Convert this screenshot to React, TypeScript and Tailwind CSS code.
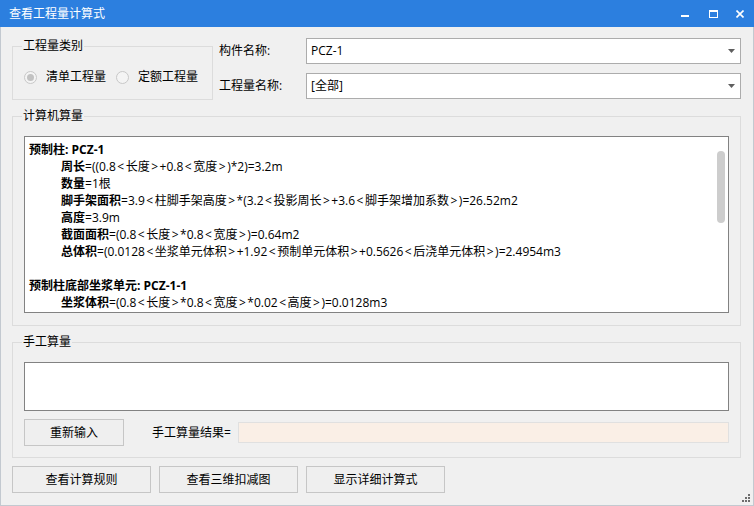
import React from 'react';

const font = { fontFamily: '"Open Sans", "Noto Sans CJK SC", sans-serif' };

type Part = { b?: boolean; t: string };

const lines: Part[][] = [
  [{ b: true, t: '预制柱: PCZ-1' }],
  [{ b: true, t: '周长' }, { t: '=((0.8<长度>+0.8<宽度>)*2)=3.2m' }],
  [{ b: true, t: '数量' }, { t: '=1根' }],
  [{ b: true, t: '脚手架面积' }, { t: '=3.9<柱脚手架高度>*(3.2<投影周长>+3.6<脚手架增加系数>)=26.52m2' }],
  [{ b: true, t: '高度' }, { t: '=3.9m' }],
  [{ b: true, t: '截面面积' }, { t: '=(0.8<长度>*0.8<宽度>)=0.64m2' }],
  [{ b: true, t: '总体积' }, { t: '=(0.0128<坐浆单元体积>+1.92<预制单元体积>+0.5626<后浇单元体积>)=2.4954m3' }],
  [],
  [{ b: true, t: '预制柱底部坐浆单元: PCZ-1-1' }],
  [{ b: true, t: '坐浆体积' }, { t: '=(0.8<长度>*0.8<宽度>*0.02<高度>)=0.0128m3' }],
];

// the brackets in the original font carry extra side bearing
function spaced(t: string) {
  return t.split(/([<>])/).map((s, k) =>
    s === '<' || s === '>' ? (
      <span key={k} className="mx-[1.5px]">{s}</span>
    ) : (
      s
    )
  );
}

function Caret() {
  return (
    <svg width="7" height="4" viewBox="0 0 7 4" className="mr-[5px]">
      <path d="M0 0 H7 L3.5 4 Z" fill="#5f5f5f" />
    </svg>
  );
}

function Select({ value }: { value: string }) {
  return (
    <div className="flex h-[26px] flex-1 items-center justify-between border border-[#acacac] bg-white pl-[4px]">
      <span className="text-[12px] text-black">{value}</span>
      <Caret />
    </div>
  );
}

function Radio({ checked, label }: { checked?: boolean; label: string }) {
  return (
    <div className="flex items-center">
      <span className="flex h-[13px] w-[13px] items-center justify-center rounded-full border border-[#c8c8c8] bg-[#f4f4f4]">
        {checked && <span className="h-[7px] w-[7px] rounded-full bg-[#c2c2c2]" />}
      </span>
      <span className="ml-[9px] text-[12px] text-black">{label}</span>
    </div>
  );
}

function Btn({ children, w }: { children: React.ReactNode; w: string }) {
  return (
    <button className={`flex h-[27px] ${w} items-center justify-center border border-[#c6c6c6] bg-[#efefef] text-[12px] text-black`}>
      {children}
    </button>
  );
}

export default function App() {
  return (
    <div className="flex h-[506px] w-[754px] flex-col overflow-hidden bg-[#f0f0f0]" style={font}>
      {/* title bar */}
      <div className="flex h-[27px] items-center justify-between bg-[#2c7fdf] pl-[9px] text-white">
        <span className="text-[12px]">查看工程量计算式</span>
        <div className="flex h-full items-center">
          <div className="flex w-[29px] justify-center pt-[5px]">
            <span className="h-[2px] w-[8px] bg-white" />
          </div>
          <div className="flex w-[29px] justify-center">
            <span className="h-[8px] w-[9px] border border-t-2 border-white" />
          </div>
          <div className="flex w-[26px] justify-center pr-[2px]">
            <svg width="8" height="8" viewBox="0 0 8 8">
              <path d="M0.5 0.5 L7.5 7.5 M7.5 0.5 L0.5 7.5" stroke="white" strokeWidth="1.6" />
            </svg>
          </div>
        </div>
      </div>

      <div className="flex flex-1 flex-col border-x border-b border-[#c3c9d0] pl-[11px] pr-[12px]">
        {/* top row */}
        <div className="mt-[11px] flex items-start">
          <fieldset className="mt-[1px] h-[61px] w-[201px] border border-[#dcdcdc] px-[11px]">
            <legend className="ml-[-2px] px-[1px] text-[12px] leading-[14px] text-black">工程量类别</legend>
            <div className="mt-[15px] flex items-center gap-[10px]">
              <Radio checked label="清单工程量" />
              <Radio label="定额工程量" />
            </div>
          </fieldset>
          <div className="ml-[6px] flex flex-1 flex-col gap-[9px]">
            <div className="flex items-center">
              <span className="w-[87px] text-[12px] text-black">构件名称:</span>
              <Select value="PCZ-1" />
            </div>
            <div className="flex items-center">
              <span className="w-[87px] text-[12px] text-black">工程量名称:</span>
              <Select value="[全部]" />
            </div>
          </div>
        </div>

        {/* computed */}
        <fieldset className="mt-[9px] h-[217px] border border-[#dcdcdc] px-[11px]">
          <legend className="ml-[-2px] px-[1px] text-[12px] leading-[14px] text-black">计算机算量</legend>
          <div className="relative mt-[13px] h-[177px] border border-[#828282] bg-white pl-[4px] pt-[4px]">
            {lines.map((ln, i) => (
              <div key={i} className={`h-[17px] whitespace-nowrap text-[12px] leading-[17px] text-black ${i === 0 || i === 8 ? '' : 'pl-[32px]'}`}>
                {ln.map((p, j) => (
                  <span key={j} className={p.b ? 'font-bold' : ''}>{spaced(p.t)}</span>
                ))}
              </div>
            ))}
            <div className="absolute right-[3px] top-[14px] h-[72px] w-[8px] rounded-full bg-[#cdcdcd]" />
          </div>
        </fieldset>

        {/* manual */}
        <fieldset className="mt-[9px] h-[123px] border border-[#dcdcdc] px-[11px]">
          <legend className="ml-[-2px] px-[1px] text-[12px] leading-[14px] text-black">手工算量</legend>
          <div className="mt-[13px] h-[49px] border border-[#828282] bg-white" />
          <div className="mt-[8px] flex items-center">
            <Btn w="w-[100px]">重新输入</Btn>
            <span className="ml-[28px] text-[12px] text-black">手工算量结果=</span>
            <div className="ml-[7px] h-[21px] flex-1 border border-[#e0e0e0] bg-[#faefe6]" />
          </div>
        </fieldset>

        {/* bottom buttons */}
        <div className="relative mt-[8px] flex gap-[8px]">
          <Btn w="w-[139px]">查看计算规则</Btn>
          <Btn w="w-[139px]">查看三维扣减图</Btn>
          <Btn w="w-[139px]">显示详细计算式</Btn>
        </div>
        <div className="relative flex-1">
          <svg width="8" height="8" viewBox="0 0 8 8" className="absolute bottom-[3px] right-[-9px]">
            <rect x="6" y="0" width="2" height="2" fill="#6d6d6d" />
            <rect x="3" y="3" width="2" height="2" fill="#6d6d6d" />
            <rect x="6" y="3" width="2" height="2" fill="#6d6d6d" />
            <rect x="0" y="6" width="2" height="2" fill="#6d6d6d" />
            <rect x="3" y="6" width="2" height="2" fill="#6d6d6d" />
            <rect x="6" y="6" width="2" height="2" fill="#6d6d6d" />
          </svg>
        </div>
      </div>
    </div>
  );
}
